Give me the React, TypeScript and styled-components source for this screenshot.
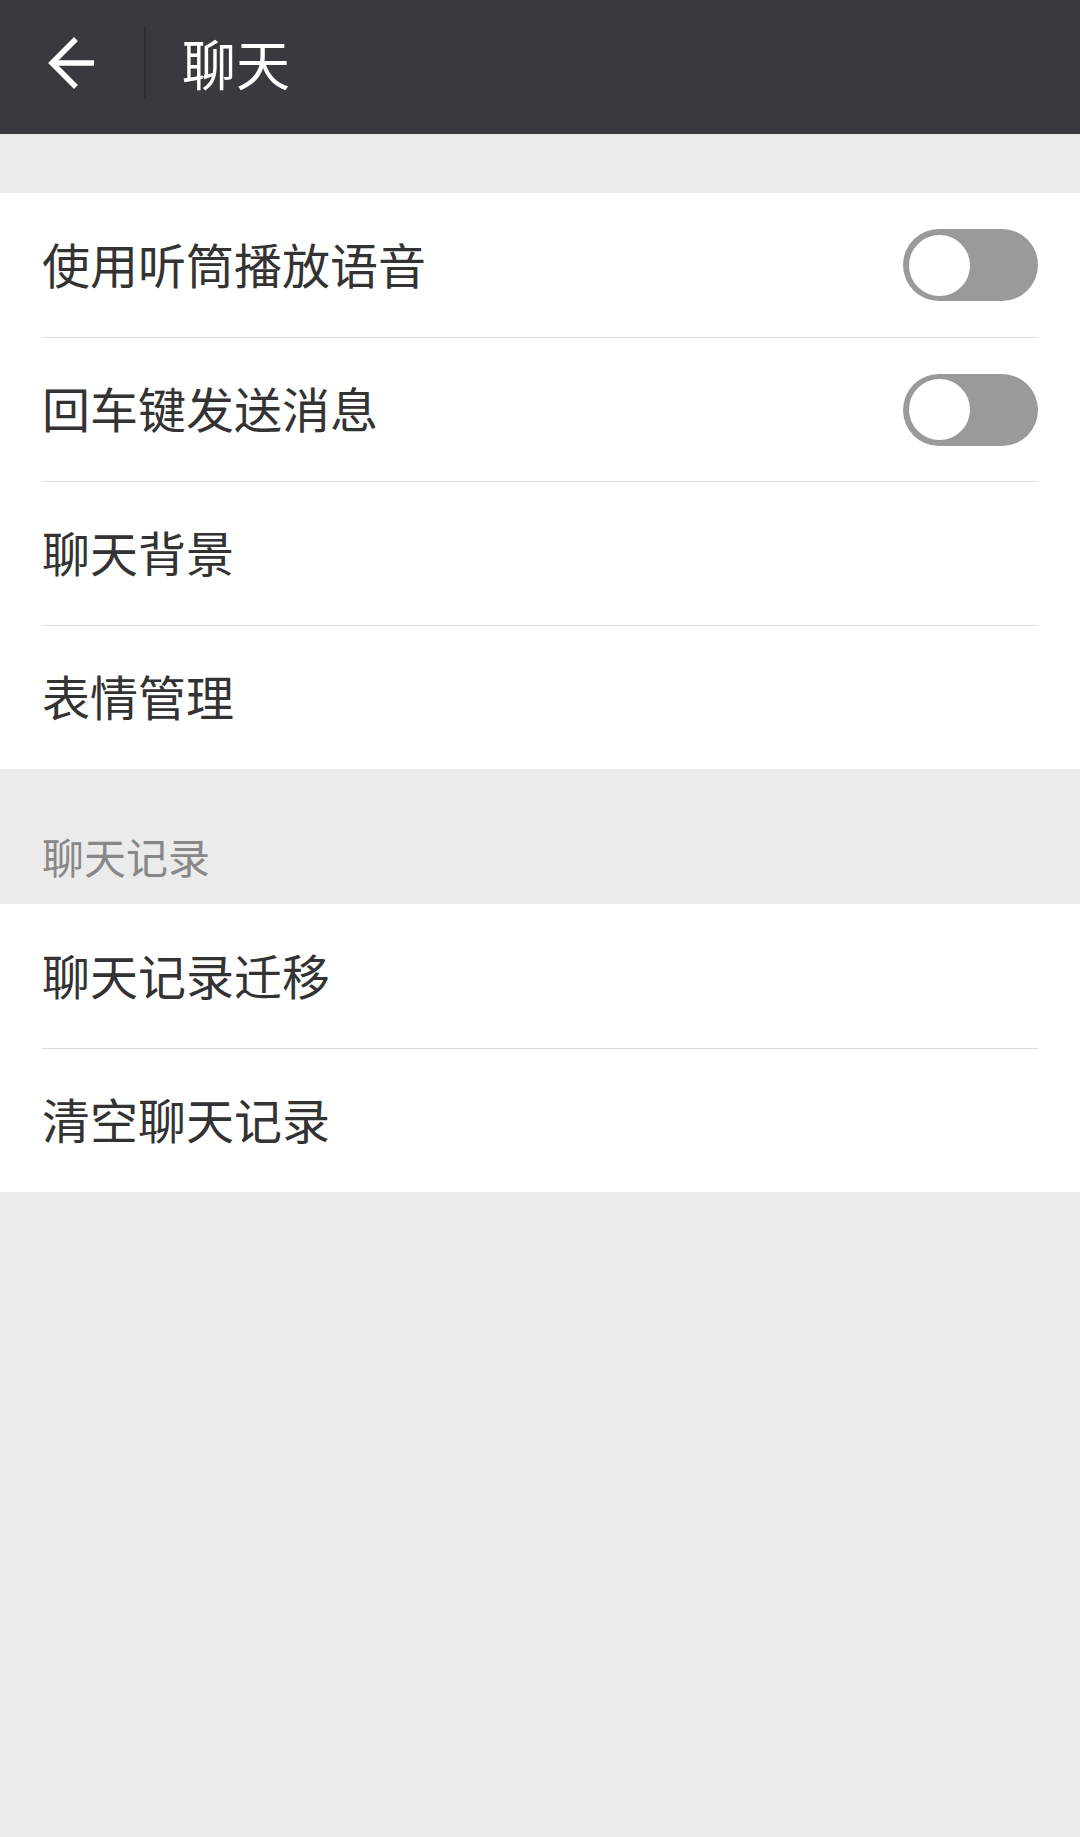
import React from 'react';
import styled, { createGlobalStyle } from 'styled-components';

const GlobalStyle = createGlobalStyle`
  html, body {
    margin: 0;
    padding: 0;
    background: #ebebeb;
    font-family: "Noto Sans CJK SC", "Noto Sans", sans-serif;
  }
`;

const Page = styled.div`
  min-height: 1837px;
  background: #ebebeb;
`;

const Header = styled.header`
  display: flex;
  align-items: center;
  height: 134px;
  background: #393a3f;
`;

const BackButton = styled.div`
  display: flex;
  align-items: center;
  justify-content: center;
  width: 144px;
  height: 100%;
  padding-bottom: 8px;
  box-sizing: border-box;
`;

const VDivider = styled.div`
  width: 2px;
  height: 72px;
  margin-top: -8px;
  background: #2e2f33;
`;

const Title = styled.h1`
  margin: -10px 0 0 36px;
  font-size: 54px;
  font-weight: 400;
  color: #ffffff;
`;

const Group = styled.section`
  background: #ffffff;
  padding: 0 42px;
`;

const Row = styled.div<{ $first?: boolean }>`
  display: flex;
  align-items: center;
  justify-content: space-between;
  height: 144px;
  box-sizing: border-box;
  border-top: ${(p) => (p.$first ? 'none' : '1px solid #dcdcdc')};
`;

const Label = styled.span`
  margin-top: -5px;
  font-size: 48px;
  color: #333333;
`;

const Spacer = styled.div<{ $h: number }>`
  height: ${(p) => p.$h}px;
`;

const SectionTitle = styled.div`
  display: flex;
  align-items: flex-end;
  height: 135px;
  padding: 0 0 18px 42px;
  box-sizing: border-box;
  font-size: 42px;
  color: #888888;
`;

const Track = styled.div`
  display: flex;
  align-items: center;
  width: 135px;
  height: 72px;
  padding: 0 6px;
  box-sizing: border-box;
  border-radius: 36px;
  background: #9a9a9a;
`;

const Knob = styled.div`
  width: 61px;
  height: 61px;
  border-radius: 50%;
  background: #ffffff;
`;

const Toggle: React.FC = () => (
  <Track>
    <Knob />
  </Track>
);

const BackArrow: React.FC = () => (
  <svg width="52" height="52" viewBox="0 0 52 52" fill="none">
    <path d="M48 26H8" stroke="#fff" strokeWidth="5.5" />
    <path d="M28 4L6 26L28 48" stroke="#fff" strokeWidth="5.5" strokeLinecap="square" />
  </svg>
);

const App: React.FC = () => {
  return (
    <Page>
      <GlobalStyle />
      <Header>
        <BackButton>
          <BackArrow />
        </BackButton>
        <VDivider />
        <Title>聊天</Title>
      </Header>
      <Spacer $h={59} />
      <Group>
        <Row $first>
          <Label>使用听筒播放语音</Label>
          <Toggle />
        </Row>
        <Row>
          <Label>回车键发送消息</Label>
          <Toggle />
        </Row>
        <Row>
          <Label>聊天背景</Label>
        </Row>
        <Row>
          <Label>表情管理</Label>
        </Row>
      </Group>
      <SectionTitle>聊天记录</SectionTitle>
      <Group>
        <Row $first>
          <Label>聊天记录迁移</Label>
        </Row>
        <Row>
          <Label>清空聊天记录</Label>
        </Row>
      </Group>
    </Page>
  );
};

export default App;
